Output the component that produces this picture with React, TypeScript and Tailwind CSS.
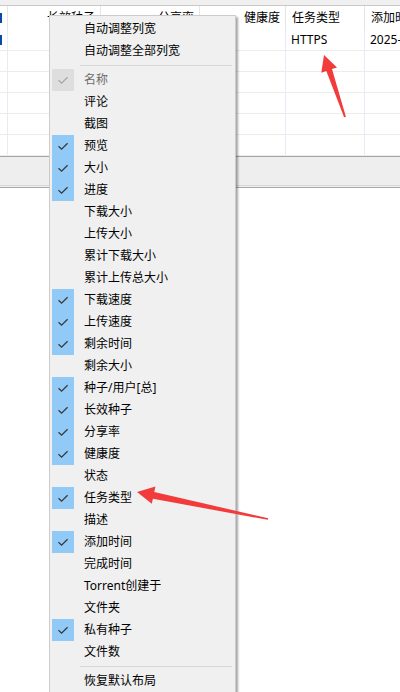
import React from "react";

const FONT = '"Segoe UI", "Noto Sans", "Noto Sans CJK SC", sans-serif';

type Item = { label: string; checked?: boolean; disabled?: boolean };

const groupA: Item[] = [
  { label: "名称", checked: true, disabled: true },
  { label: "评论" },
  { label: "截图" },
  { label: "预览", checked: true },
  { label: "大小", checked: true },
  { label: "进度", checked: true },
  { label: "下载大小" },
  { label: "上传大小" },
  { label: "累计下载大小" },
  { label: "累计上传总大小" },
  { label: "下载速度", checked: true },
  { label: "上传速度", checked: true },
  { label: "剩余时间", checked: true },
  { label: "剩余大小" },
  { label: "种子/用户[总]", checked: true },
  { label: "长效种子", checked: true },
  { label: "分享率", checked: true },
  { label: "健康度", checked: true },
  { label: "状态" },
  { label: "任务类型", checked: true },
  { label: "描述" },
  { label: "添加时间", checked: true },
  { label: "完成时间" },
  { label: "Torrent创建于" },
  { label: "文件夹" },
  { label: "私有种子", checked: true },
  { label: "文件数" },
];

function Check({ color }: { color: string }) {
  return (
    <svg width="22" height="22" viewBox="0 0 22 22">
      <path d="M6.5 11.2 L9.6 14.2 L15.6 8.2" fill="none" stroke={color} strokeWidth="1.3" />
    </svg>
  );
}

function MenuItem({ item }: { item: Item }) {
  return (
    <div className="flex h-[22px] items-center">
      <div
        className={
          "ml-[2px] h-[22px] w-[22px] " +
          (item.checked ? (item.disabled ? "bg-[#dedede]" : "bg-[#91c9f7]") : "")
        }
      >
        {item.checked && <Check color={item.disabled ? "#a8a8a8" : "#3a3a3a"} />}
      </div>
      <span
        className={
          "ml-[10px] text-[12px] leading-[22px] " +
          (item.disabled ? "text-[#6d6d6d]" : "text-black")
        }
      >
        {item.label}
      </span>
    </div>
  );
}

function Separator() {
  return (
    <div className="flex h-[7px] items-start">
      <div className="mt-[3px] ml-[30px] mr-[3px] h-px flex-1 bg-[#d7d7d7]" />
    </div>
  );
}

const cols = [8, 93, 99, 86, 79, 70];

function HeaderRow() {
  const heads: { t: string; align: "left" | "right" }[] = [
    { t: "", align: "left" },
    { t: "长效种子", align: "right" },
    { t: "分享率", align: "right" },
    { t: "健康度", align: "right" },
    { t: "任务类型", align: "left" },
    { t: "添加时间", align: "left" },
  ];
  return (
    <div className="flex h-[24px] shrink-0 bg-white">
      {heads.map((h, i) => (
        <div
          key={i}
          style={{ width: cols[i] }}
          className={
            "flex h-full shrink-0 items-center overflow-hidden whitespace-nowrap border-r border-[#e5e5e5] text-[12px] text-black " +
            (h.align === "right" ? "justify-end pr-[5px]" : "justify-start pl-[6px]")
          }
        >
          {i === 0 ? <div className="-ml-[6px] h-[10px] w-[2px] bg-[#0a4aa6]" /> : h.t}
        </div>
      ))}
    </div>
  );
}

function DataRow({ first }: { first?: boolean }) {
  const vals = ["", "", "", "", first ? "HTTPS" : "", first ? "2025-11-03 14:22" : ""];
  return (
    <div className="flex h-[21px] shrink-0 border-b border-[#ececec] bg-white">
      {vals.map((v, i) => (
        <div
          key={i}
          style={{ width: cols[i] }}
          className="flex h-full shrink-0 items-center overflow-hidden whitespace-nowrap border-r border-[#e6ecf5] pl-[5px] text-[12px] text-black"
        >
          {i === 0 && first ? <div className="-ml-[5px] h-[10px] w-[2px] bg-[#0a4aa6]" /> : v}
        </div>
      ))}
    </div>
  );
}

export default function App() {
  return (
    <div
      className="relative h-[692px] w-[400px] overflow-hidden bg-white"
      style={{ fontFamily: FONT }}
    >
      <div className="flex h-full flex-col">
        <div className="h-[6px] shrink-0 border-b border-[#c8c8c8] bg-[#f0f0f0]" />
        <div className="flex shrink-0 flex-col overflow-hidden">
          <HeaderRow />
          <DataRow first />
          <DataRow />
          <DataRow />
          <DataRow />
          <DataRow />
          <DataRow />
        </div>
        <div className="h-[30px] shrink-0 border-y border-t-[#a5a5a5] border-b-[#d8d8d8] bg-[#eeeeee]" />
        <div className="h-px shrink-0 bg-[#f0f0f0]" />
        <div className="h-px shrink-0 bg-[#a8a8a8]" />
        <div className="flex-1 bg-white" />
      </div>

      {/* context menu */}
      <div className="absolute left-[49px] top-[15px] w-[187px] border border-[#cccccc] bg-[#f0f0f0] pt-[2px] shadow-[2px_2px_2px_rgba(0,0,0,0.35)]">
        <div className="flex h-[22px] items-center">
          <span className="ml-[34px] text-[12px] text-black">自动调整列宽</span>
        </div>
        <div className="flex h-[22px] items-center">
          <span className="ml-[34px] text-[12px] text-black">自动调整全部列宽</span>
        </div>
        <Separator />
        {groupA.map((it) => (
          <MenuItem key={it.label} item={it} />
        ))}
        <Separator />
        <div className="flex h-[22px] items-center">
          <span className="ml-[34px] text-[12px] text-black">恢复默认布局</span>
        </div>
        <div className="h-[20px]" />
      </div>

      {/* annotation arrows */}
      <svg
        className="pointer-events-none absolute left-0 top-0"
        width="400"
        height="692"
        viewBox="0 0 400 692"
      >
        <polygon
          fill="#f23c3c"
          points="324,55 337,67.5 332,69.1 345.9,116.7 344.1,117.3 326.3,71.1 321.3,72.7"
        />
        <polygon
          fill="#f23c3c"
          points="137,492 155.4,486.4 154.3,492 268.2,518.3 267.8,519.8 152.9,498.8 151.8,503.8"
        />
      </svg>
    </div>
  );
}
